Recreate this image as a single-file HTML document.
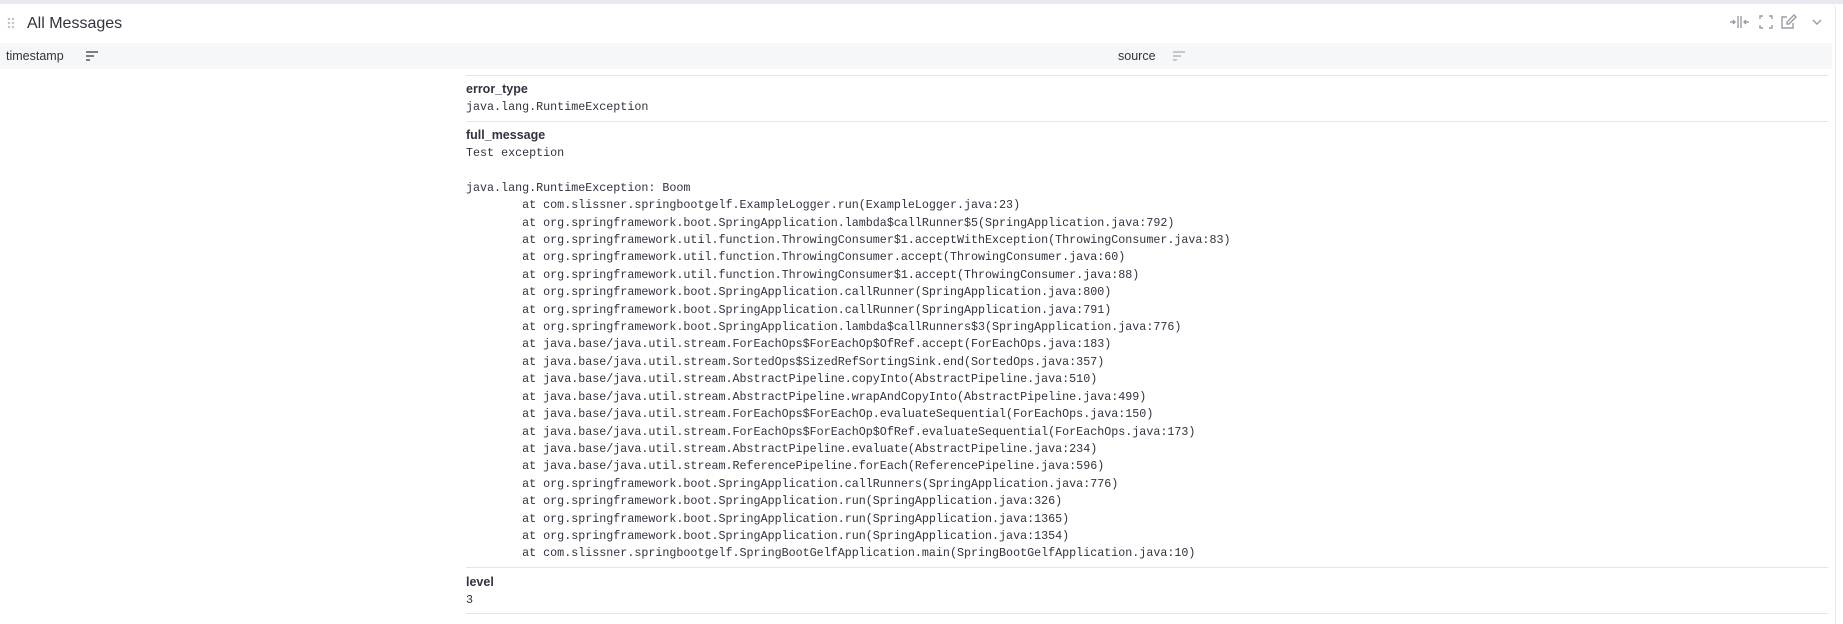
<!DOCTYPE html>
<html><head><meta charset="utf-8"><style>
*{margin:0;padding:0;box-sizing:border-box}
body{width:1843px;height:618px;background:#fff;font-family:"Liberation Sans",sans-serif;color:#31333f;overflow:hidden;position:relative}
.top{position:absolute;left:0;top:0;width:1843px;height:4px;background:#e9e9f1}
.card{position:absolute;left:0;top:4px;width:1836px;height:620px;border-right:1px solid #e6e6ea;border-top-right-radius:6px}
.title{position:absolute;left:27px;top:15px;font-size:16px;color:#31333f}
.grip{position:absolute;left:7px;top:17px;width:8px;height:13px;background-image:radial-gradient(circle,#c5c6cc 1.2px,transparent 1.4px);background-size:4px 4px}
.hdr{position:absolute;left:0;top:43px;width:1832px;height:26px;background:#f6f7f9}
.hdr span{position:absolute;top:6px;font-size:12.5px}
.sort{position:absolute;top:8px;width:14px;height:10px}
.row{position:absolute;left:466px;width:1362px;border-top:1px solid #e4e5e8}
.lbl{position:absolute;left:466px;font-weight:bold;font-size:12.5px}
pre{position:absolute;left:466px;font-family:"Liberation Mono",monospace;font-size:11.7px;line-height:17.4px;color:#31333f}
.icons{position:absolute;top:13px;color:#9a9ca5}
</style></head><body>
<div class="top"></div>
<div class="card"></div>
<div class="grip"></div>
<div class="title">All Messages</div>
<svg class="icons" style="left:1728px" width="110" height="18" viewBox="0 0 110 18" fill="none" stroke="#9a9ca5" stroke-width="1.4">
<path d="M10 3v12M13 3v12M2 9h5M5 7l2 2-2 2M21 9h-5M18 7l-2 2 2 2"/>
<path d="M32 6V3h3M41 3h3v3M44 12v3h-3M35 15h-3v-3"/>
<path d="M59 4h-5v11h11v-5"/><path d="M66 2l2 2-7 7h-2v-2z"/>
<path d="M85 7l4 4 4-4"/>
</svg>
<div class="hdr">
<span style="left:6px">timestamp</span>
<svg class="sort" style="left:85px" viewBox="0 0 14 10"><path d="M1 1h12M1 5h8M1 9h4" stroke="#55575f" stroke-width="1.6"/></svg>
<span style="left:1118px">source</span>
<svg class="sort" style="left:1172px" viewBox="0 0 14 10"><path d="M1 1h12M1 5h8M1 9h4" stroke="#b5b7be" stroke-width="1.6"/></svg>
</div>
<div class="row" style="top:75px"></div>
<div class="lbl" style="top:82px">error_type</div>
<pre style="top:99px">java.lang.RuntimeException</pre>
<div class="row" style="top:121px"></div>
<div class="lbl" style="top:128px">full_message</div>
<pre style="top:145px">Test exception

java.lang.RuntimeException: Boom
        at com.slissner.springbootgelf.ExampleLogger.run(ExampleLogger.java:23)
        at org.springframework.boot.SpringApplication.lambda$callRunner$5(SpringApplication.java:792)
        at org.springframework.util.function.ThrowingConsumer$1.acceptWithException(ThrowingConsumer.java:83)
        at org.springframework.util.function.ThrowingConsumer.accept(ThrowingConsumer.java:60)
        at org.springframework.util.function.ThrowingConsumer$1.accept(ThrowingConsumer.java:88)
        at org.springframework.boot.SpringApplication.callRunner(SpringApplication.java:800)
        at org.springframework.boot.SpringApplication.callRunner(SpringApplication.java:791)
        at org.springframework.boot.SpringApplication.lambda$callRunners$3(SpringApplication.java:776)
        at java.base/java.util.stream.ForEachOps$ForEachOp$OfRef.accept(ForEachOps.java:183)
        at java.base/java.util.stream.SortedOps$SizedRefSortingSink.end(SortedOps.java:357)
        at java.base/java.util.stream.AbstractPipeline.copyInto(AbstractPipeline.java:510)
        at java.base/java.util.stream.AbstractPipeline.wrapAndCopyInto(AbstractPipeline.java:499)
        at java.base/java.util.stream.ForEachOps$ForEachOp.evaluateSequential(ForEachOps.java:150)
        at java.base/java.util.stream.ForEachOps$ForEachOp$OfRef.evaluateSequential(ForEachOps.java:173)
        at java.base/java.util.stream.AbstractPipeline.evaluate(AbstractPipeline.java:234)
        at java.base/java.util.stream.ReferencePipeline.forEach(ReferencePipeline.java:596)
        at org.springframework.boot.SpringApplication.callRunners(SpringApplication.java:776)
        at org.springframework.boot.SpringApplication.run(SpringApplication.java:326)
        at org.springframework.boot.SpringApplication.run(SpringApplication.java:1365)
        at org.springframework.boot.SpringApplication.run(SpringApplication.java:1354)
        at com.slissner.springbootgelf.SpringBootGelfApplication.main(SpringBootGelfApplication.java:10)</pre>
<div class="row" style="top:567px"></div>
<div class="lbl" style="top:575px">level</div>
<pre style="top:592px">3</pre>
<div class="row" style="top:613px"></div>
</body></html>
